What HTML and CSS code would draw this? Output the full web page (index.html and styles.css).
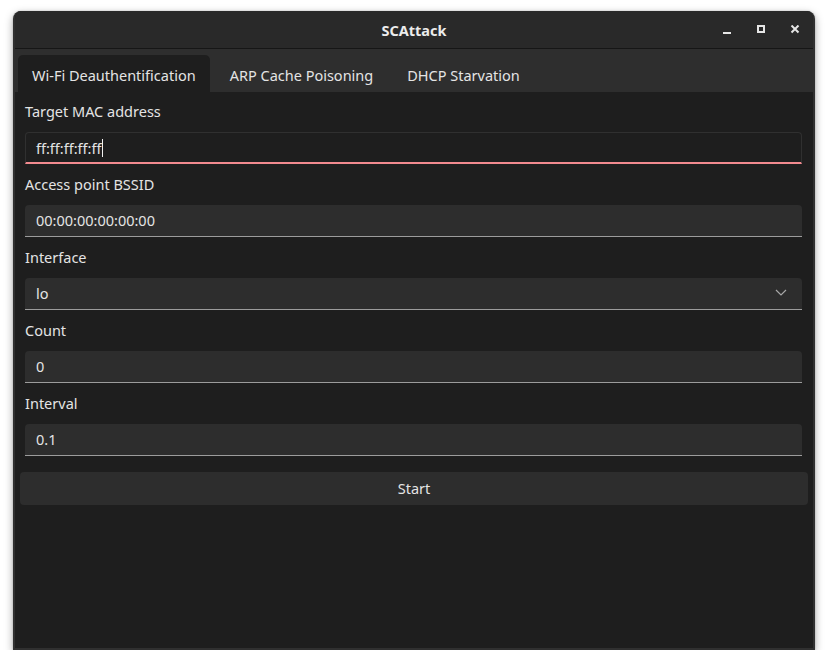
FILE: index.html
```html
<!DOCTYPE html>
<html>
<head>
<meta charset="utf-8">
<link rel="stylesheet" href="styles.css">
</head>
<body>
<div class="window">
  <div class="titlebar">
    <div class="title">SCAttack</div>
    <div class="controls">
      <svg class="ctl" width="10" height="10" viewBox="0 0 10 10"><rect x="1" y="7" width="8" height="2" fill="#e6e6e6"/></svg>
      <svg class="ctl" width="10" height="10" viewBox="0 0 10 10"><rect x="2" y="1" width="6" height="6" fill="none" stroke="#e6e6e6" stroke-width="2"/></svg>
      <svg class="ctl" width="10" height="10" viewBox="0 0 10 10"><path d="M1.5 0.5 L8.5 7.5 M8.5 0.5 L1.5 7.5" stroke="#e6e6e6" stroke-width="2" fill="none"/></svg>
    </div>
  </div>
  <div class="tabbar">
    <div class="tab active">Wi-Fi Deauthentification</div>
    <div class="tab">ARP Cache Poisoning</div>
    <div class="tab">DHCP Starvation</div>
  </div>
  <div class="content">
    <div class="fields">
      <div class="label">Target MAC address</div>
      <div class="input focused"><span>ff:ff:ff:ff:ff</span><span class="caret"></span></div>
      <div class="label">Access point BSSID</div>
      <div class="input"><span>00:00:00:00:00:00</span></div>
      <div class="label">Interface</div>
      <div class="input select"><span>lo</span>
        <svg class="chev" width="12" height="7" viewBox="0 0 12 7"><path d="M1 1 L6 6 L11 1" stroke="#a8a8a8" stroke-width="1.2" fill="none"/></svg>
      </div>
      <div class="label">Count</div>
      <div class="input"><span>0</span></div>
      <div class="label">Interval</div>
      <div class="input"><span>0.1</span></div>
    </div>
    <div class="button">Start</div>
  </div>
</div>
</body>
</html>
```

FILE: styles.css
```css
html, body {
  margin: 0;
  padding: 0;
  background: #ffffff;
}
body {
  padding: 11px 0 0 13px;
  font-family: "Noto Sans", "Open Sans", sans-serif;
  font-size: 14.5px;
  color: #e4e4e4;
}
.window {
  width: 802px;
  height: 639px;
  box-sizing: border-box;
  background: #1e1e1e;
  border: 2px solid #303030;
  border-top: none;
  border-radius: 8px 8px 0 0;
  box-shadow: 0 3px 9px rgba(0,0,0,0.35), 0 0 2px rgba(0,0,0,0.2);
  display: flex;
  flex-direction: column;
  overflow: hidden;
}
.titlebar {
  height: 37px;
  flex: none;
  background: #292929;
  border-bottom: 1px solid #161616;
  display: flex;
  align-items: center;
  justify-content: center;
  position: relative;
  margin: 0 -2px;
}
.title {
  font-weight: 700;
  font-size: 14.5px;
  color: #ececec;
}
.controls {
  position: absolute;
  right: 15px;
  top: 14px;
  display: flex;
  gap: 24px;
}
.ctl {
  display: block;
}
.tabbar {
  height: 43px;
  flex: none;
  background: #2e2e2e;
  display: flex;
  align-items: flex-end;
  padding-left: 3px;
  gap: 6px;
}
.tab {
  height: 37px;
  box-sizing: border-box;
  padding: 3px 14px 0;
  display: flex;
  align-items: center;
  border-radius: 5px 5px 0 0;
  color: #e4e4e4;
}
.tab.active {
  background: #1e1e1e;
}
.content {
  padding: 10px 5px 0 5px;
  display: flex;
  flex-direction: column;
}
.fields {
  padding: 0 6px 0 5px;
  display: flex;
  flex-direction: column;
}
.label {
  height: 19px;
  line-height: 19px;
  margin-bottom: 11px;
}
.input {
  height: 32px;
  box-sizing: border-box;
  background: #2d2d2d;
  border-radius: 4px 4px 0 0;
  border-bottom: 1px solid #9c9c9c;
  display: flex;
  align-items: center;
  padding: 0 11px 2px;
  margin-bottom: 11px;
}
.input.focused {
  background: #1e1e1e;
  border: 1px solid #303030;
  border-bottom: 2px solid #f28a8f;
  padding: 1px 11px 0 10px;
}
.caret {
  display: inline-block;
  width: 1px;
  height: 18px;
  background: #f0f0f0;
  margin-left: 1px;
}
.select {
  justify-content: space-between;
  padding-right: 15px;
}
.chev {
  display: block;
}
.button {
  margin-top: 5px;
  height: 33px;
  box-sizing: border-box;
  padding-bottom: 2px;
  background: #2d2d2d;
  border-radius: 4px;
  display: flex;
  align-items: center;
  justify-content: center;
  color: #e4e4e4;
}
```
